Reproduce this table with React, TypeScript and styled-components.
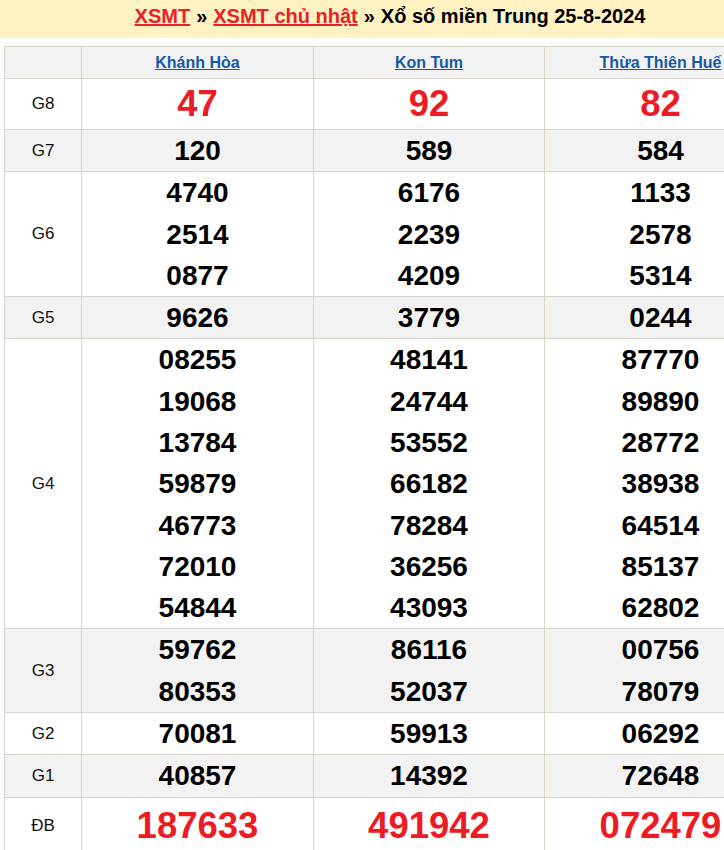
import React from "react";
import styled, { createGlobalStyle } from "styled-components";

const Global = createGlobalStyle`
  html, body { margin: 0; padding: 0; background: #fff; }
  body { font-family: "Liberation Sans", Arial, sans-serif; overflow: hidden; }
`;

const Viewport = styled.div`
  width: 724px;
  overflow: hidden;
`;

const Page = styled.div`
  width: 780px;
`;

const TitleBar = styled.h1`
  margin: 0;
  height: 38px;
  background: #fff2c2;
  display: flex;
  align-items: center;
  justify-content: center;
  font-size: 20px;
  font-weight: bold;
  color: #000;
  box-sizing: border-box;
  padding: 0 0 6px;
`;

const TitleLink = styled.a`
  color: #e8212a;
  text-decoration: underline;
`;

const Sep = styled.span`
  margin: 0 6px;
`;

const Table = styled.table`
  margin: 8px 4px 0;
  width: 772px;
  table-layout: fixed;
  border-collapse: collapse;
`;

const HeadCell = styled.th`
  background: #f2f2f2;
  border: 1px solid #d9d3cc;
  height: 31px;
  padding: 0;
  font-weight: bold;
  font-size: 16px;
  text-align: center;
  vertical-align: middle;
`;

const Province = styled.a`
  color: #1659a6;
  text-decoration: underline;
`;

const Row = styled.tr<{ $alt: boolean }>`
  background: ${(p) => (p.$alt ? "#f2f2f2" : "#ffffff")};
`;

const Label = styled.td`
  border: 1px solid #d9d3cc;
  padding: 0;
  text-align: center;
  vertical-align: middle;
  font-size: 17px;
  color: #111;
`;

const NumCell = styled.td<{ $h?: number }>`
  border: 1px solid #d9d3cc;
  padding: 0;
  text-align: center;
  vertical-align: middle;
  height: ${(p) => (p.$h ? `${p.$h}px` : "auto")};
`;

const Num = styled.div<{ $big: boolean }>`
  font-weight: bold;
  font-size: ${(p) => (p.$big ? "36.5px" : "28px")};
  color: ${(p) => (p.$big ? "#ed1c24" : "#000")};
  line-height: 41.28px;
`;

type Prize = { label: string; big?: boolean; h?: number; values: string[][] };

const provinces = ["Khánh Hòa", "Kon Tum", "Thừa Thiên Huế"];

const prizes: Prize[] = [
  { label: "G8", big: true, h: 50, values: [["47"], ["92"], ["82"]] },
  { label: "G7", values: [["120"], ["589"], ["584"]] },
  {
    label: "G6",
    values: [
      ["4740", "2514", "0877"],
      ["6176", "2239", "4209"],
      ["1133", "2578", "5314"],
    ],
  },
  { label: "G5", values: [["9626"], ["3779"], ["0244"]] },
  {
    label: "G4",
    values: [
      ["08255", "19068", "13784", "59879", "46773", "72010", "54844"],
      ["48141", "24744", "53552", "66182", "78284", "36256", "43093"],
      ["87770", "89890", "28772", "38938", "64514", "85137", "62802"],
    ],
  },
  {
    label: "G3",
    values: [
      ["59762", "80353"],
      ["86116", "52037"],
      ["00756", "78079"],
    ],
  },
  { label: "G2", values: [["70081"], ["59913"], ["06292"]] },
  { label: "G1", values: [["40857"], ["14392"], ["72648"]] },
  { label: "ĐB", big: true, h: 56, values: [["187633"], ["491942"], ["072479"]] },
];

export default function App() {
  return (
    <Viewport>
      <Global />
      <Page>
        <TitleBar>
          <TitleLink href="#">XSMT</TitleLink>
          <Sep>»</Sep>
          <TitleLink href="#">XSMT chủ nhật</TitleLink>
          <Sep>»</Sep>
          <span>Xổ số miền Trung 25-8-2024</span>
        </TitleBar>
        <Table>
          <colgroup>
            <col style={{ width: 77 }} />
            <col style={{ width: 232 }} />
            <col style={{ width: 231 }} />
            <col style={{ width: 232 }} />
          </colgroup>
          <thead>
            <tr>
              <HeadCell />
              {provinces.map((p) => (
                <HeadCell key={p}>
                  <Province href="#">{p}</Province>
                </HeadCell>
              ))}
            </tr>
          </thead>
          <tbody>
            {prizes.map((pr, i) => (
              <Row key={pr.label} $alt={i % 2 === 1}>
                <Label>{pr.label}</Label>
                {pr.values.map((col, j) => (
                  <NumCell key={j} $h={pr.h}>
                    {col.map((v, k) => (
                      <Num key={k} $big={!!pr.big}>
                        {v}
                      </Num>
                    ))}
                  </NumCell>
                ))}
              </Row>
            ))}
          </tbody>
        </Table>
      </Page>
    </Viewport>
  );
}
